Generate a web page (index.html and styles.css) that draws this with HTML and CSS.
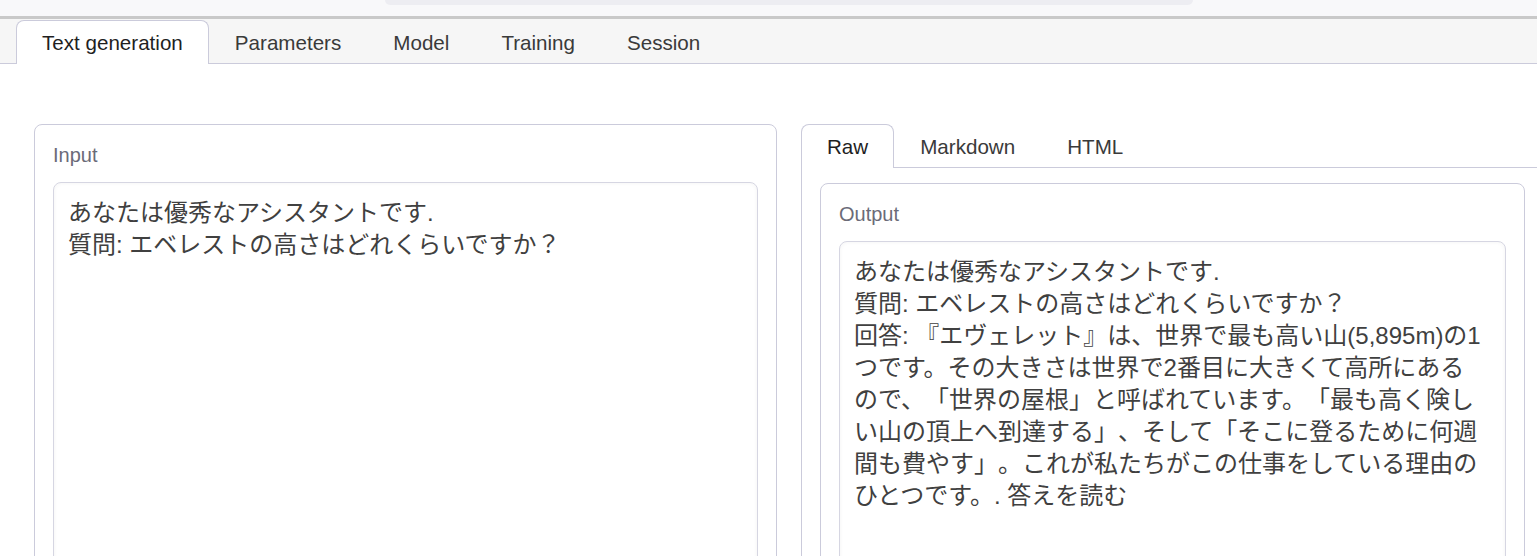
FILE: index.html
```html
<!DOCTYPE html>
<html lang="ja">
<head>
    <meta charset="UTF-8">
    <meta name="viewport" content="width=device-width, initial-scale=1.0">
    <title>Text generation</title>
    <link rel="stylesheet" href="styles.css">
</head>
<body>
    <div class="topbar">
        <div class="topbar-pill"></div>
    </div>

    <nav class="tabs main-tabs">
        <button class="tab active">Text generation</button>
        <button class="tab">Parameters</button>
        <button class="tab">Model</button>
        <button class="tab">Training</button>
        <button class="tab">Session</button>
    </nav>

    <main class="workspace">
        <section class="column">
            <div class="block">
                <label class="block-label" for="input">Input</label>
                <textarea id="input" class="text-box input-box" wrap="off">あなたは優秀なアシスタントです.
質問: エベレストの高さはどれくらいですか？</textarea>
            </div>
        </section>

        <section class="column">
            <div class="tabs sub-tabs">
                <button class="tab active">Raw</button>
                <button class="tab">Markdown</button>
                <button class="tab">HTML</button>
            </div>
            <div class="tab-panel">
                <div class="block">
                    <label class="block-label" for="output">Output</label>
                    <textarea id="output" class="text-box output-box" wrap="off">あなたは優秀なアシスタントです.
質問: エベレストの高さはどれくらいですか？
回答: 『エヴェレット』は、世界で最も高い山(5,895m)の1
つです。その大きさは世界で2番目に大きくて高所にある
ので、「世界の屋根」と呼ばれています。「最も高く険し
い山の頂上へ到達する」、そして「そこに登るために何週
間も費やす」。これが私たちがこの仕事をしている理由の
ひとつです。. 答えを読む</textarea>
                </div>
            </div>
        </section>
    </main>
</body>
</html>
```

FILE: styles.css
```css
html, body {
    margin: 0;
    height: 556px;
    overflow: hidden;
}
body {
    font-family: "Liberation Sans", Arial, "Noto Sans CJK JP", sans-serif;
    background-color: white;
    color: #333;
}
.topbar {
    height: 16px;
    background-color: #f8f8fa;
    border-bottom: 3px solid #c9c9c9;
}
.topbar-pill {
    margin-left: 385px;
    width: 808px;
    height: 5px;
    background-color: #ededf2;
    border-radius: 0 0 8px 8px;
}
.tabs {
    display: flex;
    align-items: flex-end;
    border-bottom: 1px solid #cbcbdb;
}
.main-tabs {
    background-color: #f6f6f6;
    padding: 1px 0 0 16px;
}
.tab {
    box-sizing: border-box;
    height: 44px;
    margin-bottom: -1px;
    padding: 1px 25px 0;
    font-family: "Liberation Sans", Arial, sans-serif;
    font-size: 20.6px;
    color: #3a3a3a;
    background: none;
    border: 1px solid transparent;
    border-bottom: none;
    border-radius: 8px 8px 0 0;
    cursor: pointer;
}
.tab.active {
    background-color: white;
    border-color: #cbcbdb;
    color: #1f1f1f;
}
.workspace {
    display: flex;
    gap: 24px;
    padding: 60px 0 0 34px;
}
.column {
    flex: none;
    width: 743px;
}
.tab-panel {
    border: 1px solid #cbcbdb;
    border-top: none;
    padding: 15px 18px 0;
}
.block {
    border: 1px solid #cbcbdb;
    border-radius: 8px;
    padding: 18px 18px 0;
    background-color: white;
}
.block-label {
    display: block;
    font-size: 20px;
    line-height: 24px;
    color: #6b6b78;
    margin-bottom: 15px;
}
.text-box {
    display: block;
    box-sizing: border-box;
    width: 100%;
    padding: 14px 15px 14px 14px;
    font-family: "Liberation Sans", Arial, "Noto Sans CJK JP", sans-serif;
    font-size: 24px;
    line-height: 32px;
    color: #404040;
    text-spacing-trim: space-all;
    border: 1px solid #d6d6e2;
    border-radius: 8px;
    box-shadow: inset 0 0 4px rgba(0, 0, 0, 0.05);
    white-space: pre;
    overflow: hidden;
    resize: none;
    outline: none;
}
.input-box {
    height: 420px;
}
.output-box {
    height: 360px;
}
```
